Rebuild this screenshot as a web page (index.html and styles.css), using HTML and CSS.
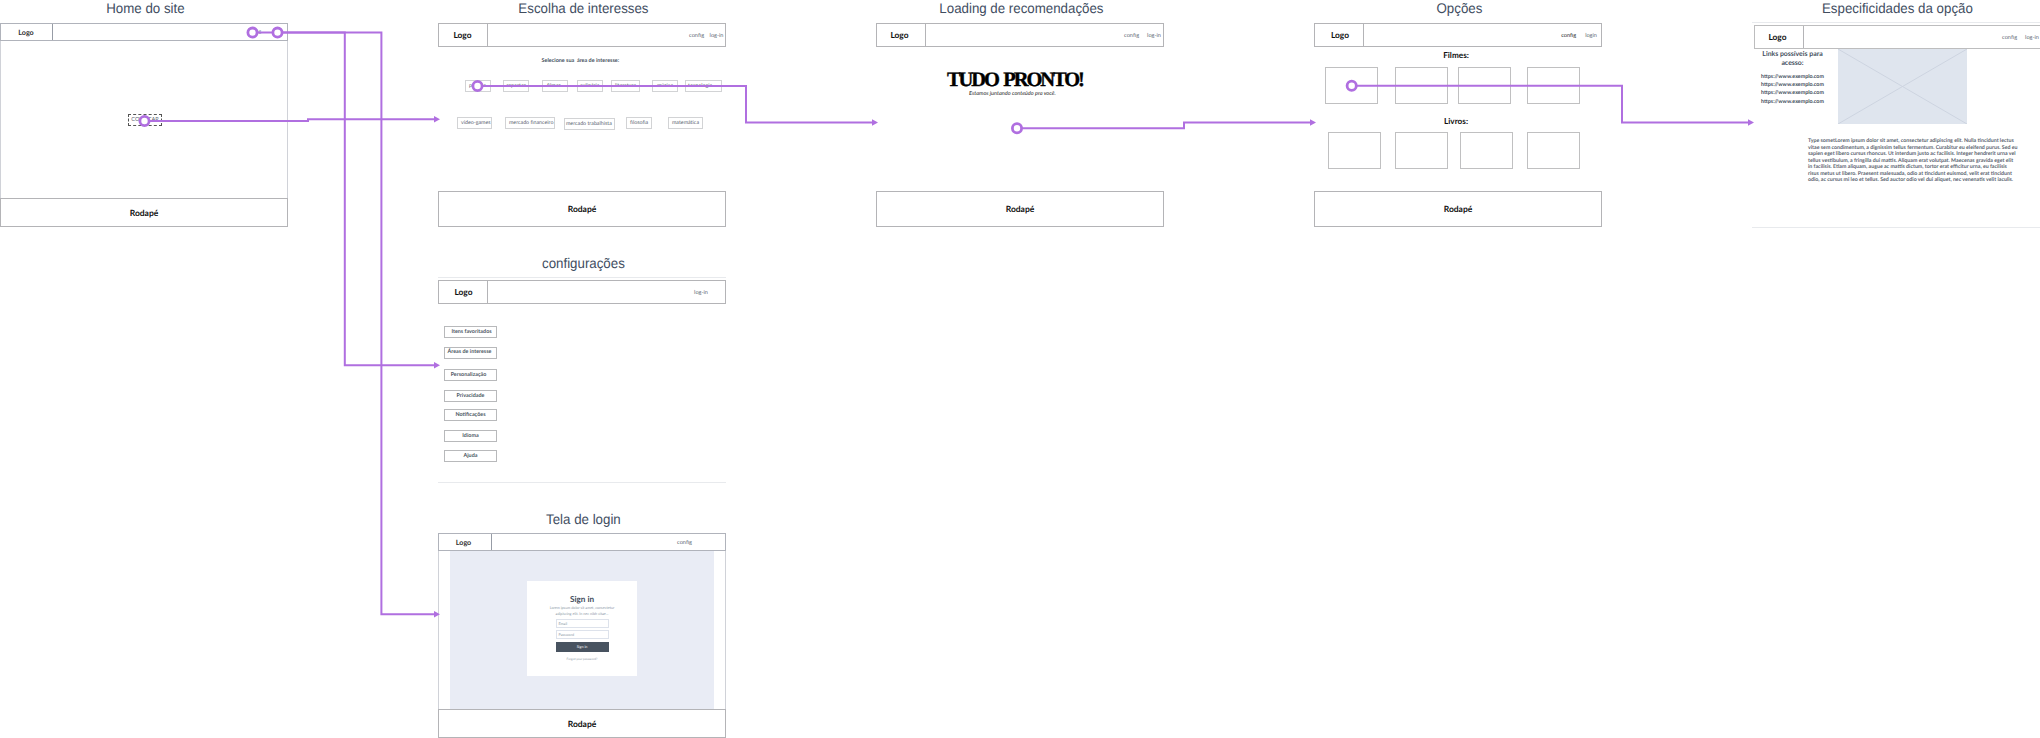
FILE: index.html
```html
<!DOCTYPE html>
<html lang="pt-BR">
<head>
<meta charset="utf-8">
<title>Wireflow</title>
<link rel="stylesheet" href="styles.css">
</head>
<body>
<main class="board">
  <section class="screen home">
    <h2 class="title">Home do site</h2>
    <div class="page framed">
      <header class="bar short"><div class="logo small">Logo</div><nav class="links"><span>config</span></nav></header>
      <div class="content center"><div class="start">COMEÇAR</div></div>
      <footer class="foot low">Rodapé</footer>
    </div>
  </section>

  <section class="screen interests">
    <h2 class="title">Escolha de interesses</h2>
    <div class="page">
      <header class="bar"><div class="logo">Logo</div><nav class="links"><span>config</span><span>log-in</span></nav></header>
      <div class="content">
        <p class="prompt">Selecione sua&nbsp; área de interesse:</p>
        <div class="chips first"><span>política</span><span>esportes</span><span>filmes</span><span>culinária</span><span>literatura</span><span>música</span><span>tecnologia</span></div>
        <div class="chips second"><span>vídeo-games</span><span>mercado financeiro</span><span>mercado trabalhista</span><span>filosofia</span><span>matemática</span></div>
      </div>
      <footer class="foot">Rodapé</footer>
    </div>
  </section>

  <section class="screen loading">
    <h2 class="title">Loading de recomendações</h2>
    <div class="page">
      <header class="bar"><div class="logo">Logo</div><nav class="links"><span>config</span><span>log-in</span></nav></header>
      <div class="content">
        <h1 class="ready">TUDO PRONTO!</h1>
        <p class="wait">Estamos juntando conteúdo pra você.</p>
      </div>
      <footer class="foot">Rodapé</footer>
    </div>
  </section>

  <section class="screen options">
    <h2 class="title">Opções</h2>
    <div class="page">
      <header class="bar"><div class="logo">Logo</div><nav class="links"><span class="dark">config</span><span>login</span></nav></header>
      <div class="content">
        <h3 class="group">Filmes:</h3>
        <div class="cards films"><i></i><i></i><i></i><i></i></div>
        <h3 class="group">Livros:</h3>
        <div class="cards books"><i></i><i></i><i></i><i></i></div>
      </div>
      <footer class="foot">Rodapé</footer>
    </div>
  </section>

  <section class="screen detail">
    <h2 class="title">Especificidades da opção</h2>
    <div class="page ruled">
      <header class="bar"><div class="logo">Logo</div><nav class="links"><span>config</span><span>log-in</span></nav></header>
      <div class="split">
        <aside class="urls">
          <h3>Links possíveis para<br>acesso:</h3>
          <p>https://www.exemplo.com</p><p>https://www.exemplo.com</p><p>https://www.exemplo.com</p><p>https://www.exemplo.com</p>
        </aside>
        <svg class="photo" viewBox="0 0 129 75"><path d="M0 0L129 75M129 0L0 75"/></svg>
      </div>
      <p class="lorem">Type sometLorem ipsum dolor sit amet, consectetur adipiscing elit. Nulla tincidunt lectus<br>vitae sem condimentum, a dignissim tellus fermentum. Curabitur eu eleifend purus. Sed eu<br>sapien eget libero cursus rhoncus. Ut interdum justo ac facilisis. Integer hendrerit urna vel<br>tellus vestibulum, a fringilla dui mattis. Aliquam erat volutpat. Maecenas gravida eget elit<br>in facilisis. Etiam aliquam, augue ac mattis dictum, tortor erat efficitur urna, eu facilisis<br>risus metus ut libero. Praesent malesuada, odio at tincidunt euismod, velit erat tincidunt<br>odio, ac cursus mi leo et tellus. Sed auctor odio vel dui aliquet, nec venenatis velit iaculis.</p>
    </div>
  </section>

  <section class="screen settings">
    <h2 class="title">configurações</h2>
    <div class="page ruled">
      <header class="bar"><div class="logo">Logo</div><nav class="links"><span>log-in</span></nav></header>
      <div class="menu"><span>Itens favoritados</span><span>Áreas de interesse</span><span>Personalização</span><span>Privacidade</span><span>Notificações</span><span>Idioma</span><span>Ajuda</span></div>
    </div>
  </section>

  <section class="screen login">
    <h2 class="title">Tela de login</h2>
    <div class="page framed">
      <header class="bar short"><div class="logo small">Logo</div><nav class="links"><span>config</span></nav></header>
      <div class="content backdrop">
        <form class="signin">
          <h3>Sign in</h3>
          <p class="hint">Lorem ipsum dolor sit amet, consectetur<br>adipiscing elit. In nec nibh vitae...</p>
          <div class="field">Email</div>
          <div class="field">Password</div>
          <div class="submit">Sign in</div>
          <p class="forgot">Forgot your password?</p>
        </form>
      </div>
      <footer class="foot low">Rodapé</footer>
    </div>
  </section>

  <svg class="flows" width="2040" height="738" viewBox="0 0 2040 738">
    <g class="wires">
      <path d="M252.5 32.6H344.8V365.3H435"/>
      <path d="M277.5 32.6H381.4V614.3H435"/>
      <path d="M144.5 121H308V119.3H435"/>
      <path d="M477.5 86H746V122.5H873"/>
      <path d="M1017 128.3H1184V122.5H1311"/>
      <path d="M1351.5 85.8H1622V122.5H1749"/>
    </g>
    <g class="tips">
      <path d="M434 362.1l6 3.2l-6 3.2z"/><path d="M434 611.1l6 3.2l-6 3.2z"/><path d="M434 116.1l6 3.2l-6 3.2z"/>
      <path d="M872 119.3l6 3.2l-6 3.2z"/><path d="M1310 119.3l6 3.2l-6 3.2z"/><path d="M1748 119.3l6 3.2l-6 3.2z"/>
    </g>
    <g class="dots">
      <circle cx="252.5" cy="32.6" r="4.6"/><circle cx="277.5" cy="32.6" r="4.6"/><circle cx="144.5" cy="121" r="4.6"/>
      <circle cx="477.5" cy="86" r="4.6"/><circle cx="1017" cy="128.3" r="4.6"/><circle cx="1351.7" cy="85.8" r="4.6"/>
    </g>
  </svg>
</main>
</body>
</html>
```
FILE: styles.css
```css
* { box-sizing: border-box; margin: 0; padding: 0; }
body { background: #fff; color: #5d6673; font-family: Lato, "Liberation Sans", sans-serif; font-size: 5.4px; text-rendering: geometricPrecision; overflow: hidden; }
.board { position: relative; width: 2040px; height: 738px; overflow: hidden; }

/* Screens are nodes on a free canvas */
.screen { position: absolute; top: 0; width: 288px; white-space: nowrap; }
.home { left: 0; }
.interests { left: 438px; }
.loading { left: 876px; }
.options { left: 1314px; }
.detail { left: 1752px; }
.settings { left: 438px; top: 254px; }
.login { left: 438px; top: 510px; }
.title { height: 23px; padding-left: 3px; text-align: center; font: 400 14px/17px "Liberation Sans", Arial, sans-serif; color: #414d5f; transform: scaleX(.95); }
.page { display: flex; flex-direction: column; height: 204px; }
.framed { border-left: 1px solid #d0d2d8; border-right: 1px solid #d0d2d8; }
.framed > .bar, .framed > .foot { margin: 0 -1px; }
.ruled { border-top: 1px solid #e8eaed; border-bottom: 1px solid #e8eaed; }

.bar { display: flex; flex: none; height: 24px; border: 1px solid #b4b4b7; background: #fff; }
.logo { width: 49px; padding-right: 1px; border-right: 1px solid #b4b4b7; display: flex; align-items: center; justify-content: center; font-size: 8.4px; font-weight: 700; color: #111; }
.short { height: 18px; border-color: #b0b3bb; }
.logo.small { width: 52px; border-color: #979ca6; font-size: 7.2px; color: #333; }
.links { flex: 1; display: flex; align-items: center; justify-content: flex-end; gap: 6px; padding-right: 2px; font-size: 5.6px; }
.links .dark { color: #222; }
.home .links { padding-right: 26px; font-size: 5px; }
.interests .links { gap: 5.5px; padding-right: 1.5px; }
.loading .links { gap: 8px; }
.loading .logo { padding-right: 3px; }
.options .logo { padding-left: 3px; }
.options .links { gap: 9px; padding-right: 4px; }
.content { flex: 1; min-height: 0; }
.foot { flex: none; height: 36px; border: 1px solid #b4b4b7; display: flex; align-items: center; justify-content: center; font-size: 8.5px; font-weight: 700; color: #111; }
.foot.low { height: 29px; }
.center { display: flex; align-items: center; justify-content: center; }
.start { width: 34px; height: 12px; margin-left: 2px; border: 1px dashed #555; font-size: 5.6px; line-height: 10px; text-align: center; }

/* Interests */
.prompt { padding: 10px 0 0 103.5px; font-size: 5.45px; line-height: 9px; height: 18px; font-weight: 700; color: #46505e; }
.chips { display: flex; }
.chips span { flex: none; height: 12px; border: 1px solid #d2d3d5; padding-left: 3px; font-size: 5.3px; line-height: 11px; }
.first { padding: 15px 0 0 27px; }
.first span { width: 26px; }
.first span:nth-child(1) { margin-right: 12px; }
.first span:nth-child(2) { margin-right: 13px; padding-left: 2px; }
.first span:nth-child(3) { margin-right: 9px; padding-left: 4px; }
.first span:nth-child(4) { margin-right: 8px; padding-left: 2px; }
.first span:nth-child(5) { margin-right: 12px; width: 29px; }
.first span:nth-child(6) { margin-right: 7px; padding-left: 4px; }
.first span:nth-child(7) { width: 37px; padding-left: 2px; }
.second { padding: 25px 0 0 19px; }
.second span:nth-child(1) { width: 35px; margin-right: 13px; }
.second span:nth-child(2) { width: 50px; margin-right: 9px; }
.second span:nth-child(3) { width: 51px; margin: 1px 11px 0 0; padding-left: 1px; }
.second span:nth-child(4) { width: 26px; margin-right: 16px; }
.second span:nth-child(5) { width: 35px; }

/* Loading */
.ready { height: 43px; padding: 23px 0 0 71px; font: 700 20.5px/20px "Liberation Serif", serif; letter-spacing: -2.1px; word-spacing: 2.5px; -webkit-text-stroke: .4px #000; color: #000; }
.wait { padding-left: 93px; font-size: 5.6px; line-height: 8px; font-style: italic; color: #222; }

/* Options */
.group { padding-right: 4px; font-size: 8.2px; line-height: 16px; text-align: center; color: #111; }
.cards { display: flex; }
.cards i { flex: none; width: 53px; height: 37px; border: 1px solid #c0c0c1; }
.films { padding: 4px 0 9px 11px; }
.films i:nth-child(1) { margin-right: 17px; }
.films i:nth-child(3) { margin-right: 16px; }
.films i:nth-child(2) { margin-right: 10px; }
.books { padding: 3px 0 0 14px; }
.books i:nth-child(1) { margin-right: 14px; }
.books i:nth-child(2) { margin-right: 12px; }
.books i:nth-child(3) { margin-right: 14px; }

/* Option detail */
.detail .page { height: 206px; margin-top: -1px; }
.detail .bar { margin: 2px -6px 0 2px; border-color: #bdbdbe; }
.detail .logo { padding-right: 3px; }
.detail .links { gap: 8px; padding-right: 6px; }
.split { display: flex; height: 86px; }
.urls { flex: none; width: 86px; padding: 1px 5px 0 0; text-align: center; font-weight: 700; font-size: 5.35px; color: #434e5c; }
.urls h3 { font-size: 6.9px; line-height: 9px; margin-bottom: 5px; }
.urls p { line-height: 8.2px; }
.photo { width: 129px; height: 75px; background: #dfe5ee; }
.photo path { stroke: #cdd4e0; fill: none; }
.lorem { padding: 3px 0 0 56px; font-size: 5.25px; line-height: 6.55px; font-weight: 700; color: #5b6470; }

/* Settings */
.settings .title, .login .title { line-height: 18px; }
.settings .page { height: 206px; }
.settings .bar { margin-top: 2px; }
.settings .logo { padding-left: 2px; }
.settings .links { padding-right: 17px; }
.menu { display: flex; flex-direction: column; padding: 22px 0 0 6px; }
.menu span { width: 53px; height: 12px; border: 1px solid #b8b9bb; font-size: 5.4px; font-weight: 700; line-height: 11px; text-align: center; color: #4d5764; }
.menu span:nth-child(1) { margin-bottom: 9px; padding-left: 2px; }
.menu span:nth-child(2) { margin-bottom: 10px; padding-right: 2px; line-height: 9px; }
.menu span:nth-child(3) { margin-bottom: 9px; padding-right: 4px; }
.menu span:nth-child(4) { margin-bottom: 7px; }
.menu span:nth-child(5) { margin-bottom: 9px; }
.menu span:nth-child(6) { margin-bottom: 8px; }

/* Login */
.login .page { height: 205px; }
.login .links { padding-right: 33px; }
.login .logo { width: 53px; padding-right: 3px; }
.backdrop { margin: 0 11px; background: #e9ecf5; display: flex; align-items: center; justify-content: center; }
.signin { width: 110px; height: 95px; margin-bottom: 3px; padding-top: 12px; background: #fff; display: flex; flex-direction: column; align-items: center; text-align: center; color: #8b97a6; }
.signin h3 { font-size: 8.2px; line-height: 12px; color: #424d5b; }
.hint { font-size: 3.7px; line-height: 5.7px; margin-bottom: 3px; }
.field { width: 53px; height: 9px; margin-bottom: 2px; border: 1px solid #dde2eb; padding-left: 2px; font-size: 3.7px; line-height: 7px; text-align: left; }
.submit { width: 53px; height: 10px; margin-top: 1px; background: #485360; color: #fff; font-size: 3.7px; line-height: 10px; }
.forgot { margin-top: 5px; font-size: 3.1px; line-height: 5px; }

/* Connectors lie over the screens */
.flows { position: absolute; left: 0; top: 0; }
.wires path { fill: none; stroke: #b06fe0; stroke-width: 2; }
.tips path { fill: #b06fe0; }
.dots circle { fill: #fff; stroke: #b06fe0; stroke-width: 2.8; }
```
